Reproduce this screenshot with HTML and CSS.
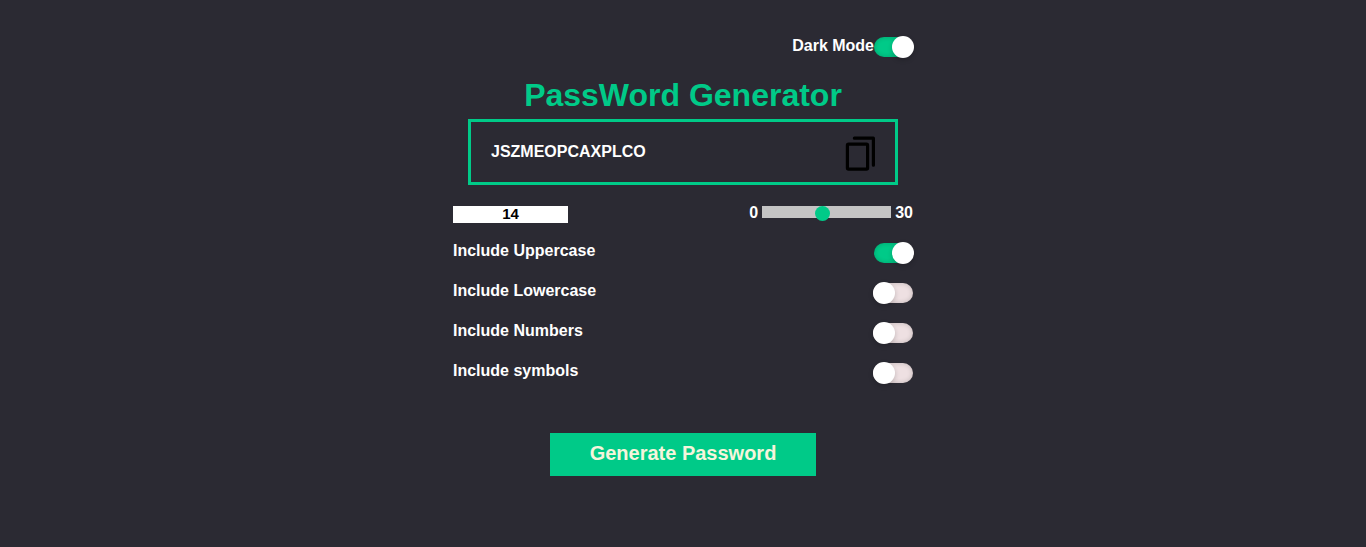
FILE: index.html
```html
<!DOCTYPE html>
<html lang="en">
<head>
<meta charset="utf-8">
<meta name="viewport" content="width=device-width, initial-scale=1">
<title>PassWord Generator</title>
<link rel="stylesheet" href="styles.css">
</head>
<body>
<main class="generator">
  <div class="mode">
    <label for="dark">Dark Mode</label>
    <input class="switch" type="checkbox" id="dark" checked>
  </div>
  <h1 class="title">PassWord Generator</h1>
  <div class="result">
    <output class="password">JSZMEOPCAXPLCO</output>
    <button class="copy" type="button" aria-label="Copy password">
      <svg width="32" height="38" viewBox="0 0 32 38" fill="none" stroke="#000" stroke-width="3.2" stroke-linecap="round" stroke-linejoin="round">
        <rect x="4.4" y="11.2" width="20.2" height="25" rx="1.2"/>
        <path d="M11.4 5.2H30.4V32.2"/>
      </svg>
    </button>
  </div>
  <div class="length">
    <input class="count" type="text" inputmode="numeric" value="14" aria-label="Password length">
    <div class="scale">
      <span>0</span>
      <input class="slider" type="range" min="0" max="30" value="14" aria-label="Length slider">
      <span>30</span>
    </div>
  </div>
  <div class="options">
    <div class="option">
      <label for="upper">Include Uppercase</label>
      <input class="switch" type="checkbox" id="upper" checked>
    </div>
    <div class="option">
      <label for="lower">Include Lowercase</label>
      <input class="switch" type="checkbox" id="lower">
    </div>
    <div class="option">
      <label for="numbers">Include Numbers</label>
      <input class="switch" type="checkbox" id="numbers">
    </div>
    <div class="option">
      <label for="symbols">Include symbols</label>
      <input class="switch" type="checkbox" id="symbols">
    </div>
  </div>
  <button class="generate" type="button">Generate Password</button>
</main>
</body>
</html>
```
FILE: styles.css
```css
* {
  box-sizing: border-box;
}

body {
  margin: 0;
  background: #2b2a33;
  color: #fff;
  font: bold 16px/18px "Liberation Sans", Arial, sans-serif;
}

input,
button {
  margin: 0;
  padding: 0;
  border: 0;
  font: inherit;
}

.generator {
  display: flex;
  flex-direction: column;
  max-width: 460px;
  margin: 0 auto;
  padding-top: 37px;
}

.mode {
  display: flex;
  justify-content: flex-end;
}

.title {
  margin: 20px 0 5px;
  color: #00ca88;
  font-size: 32px;
  line-height: 37px;
  text-align: center;
}

.result {
  display: flex;
  align-items: center;
  justify-content: space-between;
  margin: 0 15px;
  padding: 11px 20px;
  border: 3px solid #00ca88;
}

.password {
  line-height: 20px;
}

.copy {
  display: flex;
  background: none;
  cursor: pointer;
}

.length {
  display: flex;
  align-items: flex-start;
  justify-content: space-between;
  margin-top: 21px;
}

.count {
  width: 25%;
  height: 17px;
  padding-bottom: 2px;
  background: #fff;
  color: #000;
  font-size: 15px;
  line-height: 15px;
  text-align: center;
}

.scale {
  display: flex;
  align-items: flex-start;
  gap: 4px;
  line-height: 14px;
}

.slider {
  width: 129px;
  height: 12px;
  appearance: none;
  background: #c4c4c4;
}

.slider::-webkit-slider-thumb {
  width: 15px;
  height: 15px;
  margin-top: 2px;
  appearance: none;
  border-radius: 50%;
  background: #00ca88;
}

.options {
  display: grid;
  gap: 20px;
  margin-top: 20px;
}

.option {
  display: flex;
  justify-content: space-between;
  line-height: 16px;
}

.switch {
  display: flex;
  align-items: center;
  width: 40px;
  height: 20px;
  appearance: none;
  border-radius: 20px;
  background: #eee0e2;
  box-shadow: inset 0 0 5px rgba(0, 0, 0, 0.2);
  cursor: pointer;
}

.switch::before {
  content: "";
  flex: none;
  width: 22px;
  height: 22px;
  border-radius: 50%;
  background: #fff;
  box-shadow: 0 2px 5px rgba(0, 0, 0, 0.2);
}

.switch:checked {
  width: 39px;
  background: #00ca88;
}

.switch:checked::before {
  margin-left: 18px;
}

.generate {
  align-self: center;
  margin-top: 50px;
  padding: 9px 40px 11px;
  background: #00ca88;
  color: #f5f5dc;
  font-size: 20px;
  line-height: 23px;
  cursor: pointer;
}
```
